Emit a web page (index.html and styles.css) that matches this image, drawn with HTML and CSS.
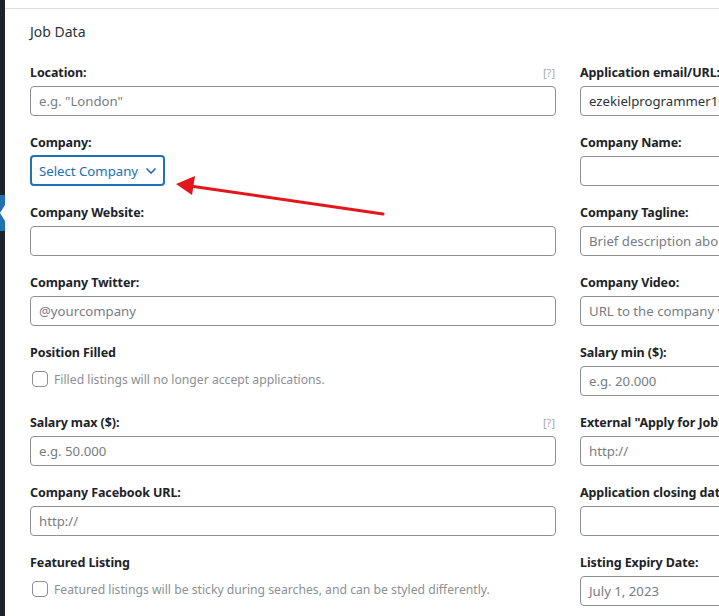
FILE: index.html
```html
<!DOCTYPE html>
<html lang="en">
<head>
<meta charset="utf-8">
<title>Job Data</title>
<link rel="stylesheet" href="styles.css">
</head>
<body>
<div class="page">
  <aside class="sidebar">
    <div class="menu-current"></div>
  </aside>
  <main class="main">
    <section class="panel">
      <h2 class="panel-title">Job Data</h2>
      <div class="fields">
        <div class="field">
          <div class="label-row"><label>Location:</label><span class="tip">[?]</span></div>
          <div class="input placeholder">e.g. "London"</div>
        </div>
        <div class="field">
          <div class="label-row"><label>Application email/URL:</label></div>
          <div class="input value">ezekielprogrammer10@gmail.com</div>
        </div>

        <div class="field">
          <div class="label-row"><label>Company:</label></div>
          <div class="select">
            <span>Select Company</span>
            <svg class="chev" width="12" height="8" viewBox="0 0 12 8"><path d="M1.5 1.5 L6 6 L10.5 1.5" fill="none" stroke="#2271b1" stroke-width="1.6"/></svg>
          </div>
        </div>
        <div class="field">
          <div class="label-row"><label>Company Name:</label></div>
          <div class="input"></div>
        </div>

        <div class="field">
          <div class="label-row"><label>Company Website:</label></div>
          <div class="input"></div>
        </div>
        <div class="field">
          <div class="label-row"><label>Company Tagline:</label></div>
          <div class="input placeholder">Brief description about the company</div>
        </div>

        <div class="field">
          <div class="label-row"><label>Company Twitter:</label></div>
          <div class="input placeholder">@yourcompany</div>
        </div>
        <div class="field">
          <div class="label-row"><label>Company Video:</label></div>
          <div class="input placeholder">URL to the company video</div>
        </div>

        <div class="field">
          <div class="label-row"><label>Position Filled</label></div>
          <div class="check-row"><span class="checkbox"></span><span class="desc">Filled listings will no longer accept applications.</span></div>
        </div>
        <div class="field">
          <div class="label-row"><label>Salary min ($):</label></div>
          <div class="input placeholder">e.g. 20.000</div>
        </div>

        <div class="field">
          <div class="label-row"><label>Salary max ($):</label><span class="tip">[?]</span></div>
          <div class="input placeholder">e.g. 50.000</div>
        </div>
        <div class="field">
          <div class="label-row"><label>External "Apply for Job" link:</label></div>
          <div class="input placeholder">http://</div>
        </div>

        <div class="field">
          <div class="label-row"><label>Company Facebook URL:</label></div>
          <div class="input placeholder">http://</div>
        </div>
        <div class="field">
          <div class="label-row"><label>Application closing date:</label></div>
          <div class="input"></div>
        </div>

        <div class="field">
          <div class="label-row"><label>Featured Listing</label></div>
          <div class="check-row"><span class="checkbox"></span><span class="desc">Featured listings will be sticky during searches, and can be styled differently.</span></div>
        </div>
        <div class="field">
          <div class="label-row"><label>Listing Expiry Date:</label></div>
          <div class="input placeholder">July 1, 2023</div>
        </div>
      </div>
    </section>
  </main>
  <svg class="annotation" width="719" height="616" viewBox="0 0 719 616">
    <line x1="383" y1="214" x2="190" y2="186" stroke="#e3161b" stroke-width="3" stroke-linecap="round"/>
    <polygon points="176,184 195,176 192,195" fill="#e3161b"/>
  </svg>
</div>
</body>
</html>
```

FILE: styles.css
```css
html, body {
  margin: 0;
  padding: 0;
  background: #fff;
}

body {
  font-family: "Noto Sans", "Open Sans", sans-serif;
  color: #1d2327;
  overflow: hidden;
}

.page {
  position: relative;
  display: flex;
  width: 719px;
  height: 616px;
  overflow: hidden;
}

.sidebar {
  flex: none;
  width: 5px;
  background: #1d2327;
  padding-top: 195px;
}

.menu-current {
  position: relative;
  height: 36px;
  background: #2271b1;
}

.menu-current::after {
  content: "";
  position: absolute;
  left: 0;
  top: 10px;
  border-top: 8px solid transparent;
  border-bottom: 8px solid transparent;
  border-left: 5px solid #fff;
  transform: scaleX(-1);
}

.main {
  flex: 1;
  min-width: 0;
  padding-top: 8px;
  background: #fff;
}

.panel {
  border-top: 1px solid #dcdcde;
  padding-left: 25px;
}

.panel-title {
  margin: 13px 0 20px;
  font-size: 14px;
  line-height: 20px;
  font-weight: 400;
  color: #2c3338;
}

.fields {
  display: grid;
  grid-template-columns: 526px 526px;
  column-gap: 24px;
  row-gap: 16px;
  align-items: start;
}

.field {
  display: flex;
  flex-direction: column;
  gap: 4px;
}

.label-row {
  display: flex;
  justify-content: space-between;
  align-items: center;
  height: 20px;
  white-space: nowrap;
}

.label-row label {
  font-size: 12.5px;
  font-weight: 700;
  color: #1d2327;
  letter-spacing: -0.1px;
}

.tip {
  font-size: 11px;
  color: #a7aaad;
  padding-right: 1px;
}

.input {
  box-sizing: border-box;
  height: 30px;
  border: 1px solid #8c8f94;
  border-radius: 4px;
  padding: 0 8px;
  font-size: 13.2px;
  line-height: 28px;
  white-space: nowrap;
  overflow: hidden;
}

.input.placeholder {
  color: #787c82;
}

.input.value {
  color: #2c3338;
}

.select {
  box-sizing: border-box;
  display: flex;
  align-items: center;
  gap: 7px;
  width: 135px;
  height: 31px;
  margin-top: -1px;
  border: 2px solid #2271b1;
  border-radius: 4px;
  padding: 0 7px;
  color: #2271b1;
  font-size: 13.2px;
  white-space: nowrap;
}

.chev {
  flex: none;
}

.check-row {
  display: flex;
  align-items: center;
  gap: 6px;
  margin-top: 3px;
  padding-left: 2px;
  height: 20px;
}

.checkbox {
  box-sizing: border-box;
  width: 16px;
  height: 16px;
  border: 1px solid #8c8f94;
  border-radius: 4px;
  flex: none;
}

.desc {
  font-size: 12.2px;
  color: #8c8f94;
  white-space: nowrap;
}

.annotation {
  position: absolute;
  left: 0;
  top: 0;
  pointer-events: none;
}
```
